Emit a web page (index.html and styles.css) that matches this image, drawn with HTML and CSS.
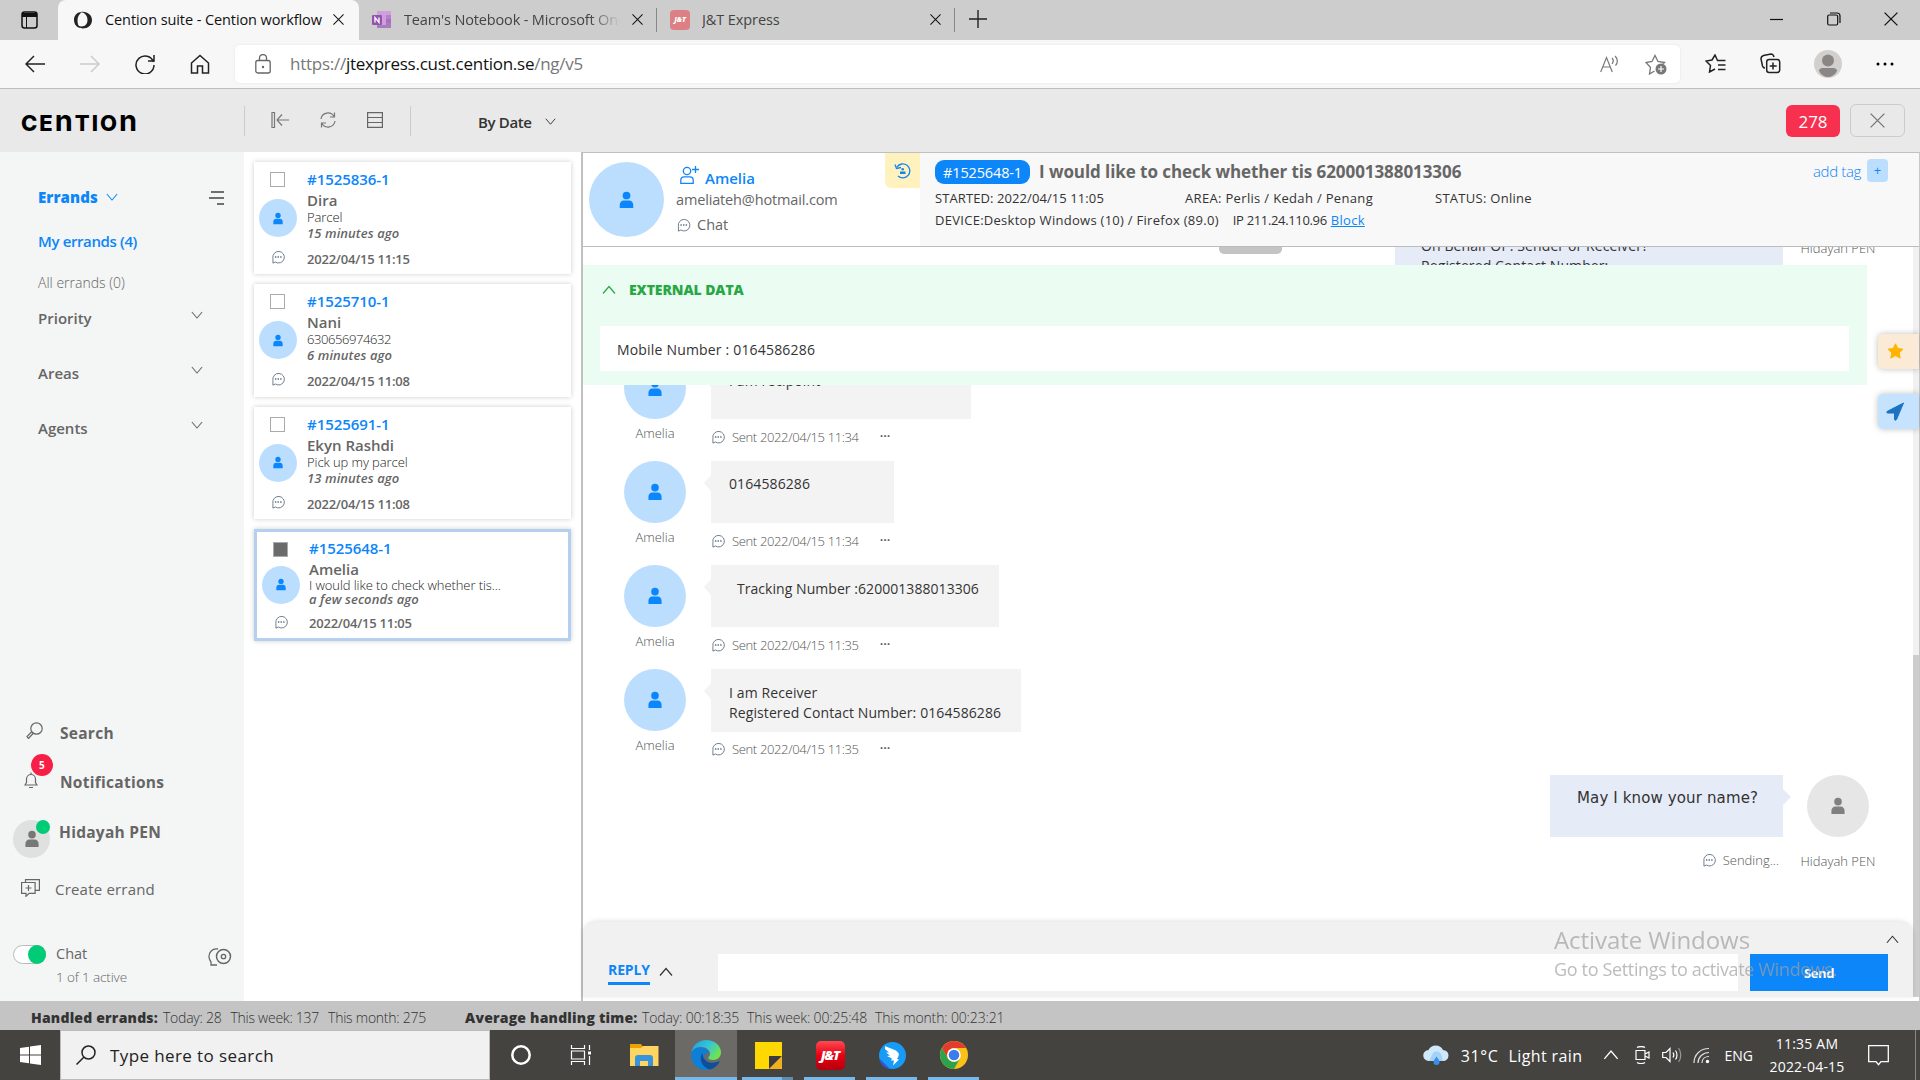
FILE: index.html
```html
<!DOCTYPE html>
<html lang="en">
<head>
  <meta charset="UTF-8" />
  <title>Cention suite - Cention workflow</title>
  <link rel="stylesheet" href="styles.css">
</head>
<body>

  <!-- ICONS -->
  <svg class="sprite">
    <symbol id="i-user" viewBox="0 0 16 20"><circle cx="8" cy="5" r="4.300"/><path d="M.5 19v-3.500c0-3 2-5 4.500-5h6c2.500 0 4.500 2 4.500 5V19z"/></symbol>
    <symbol id="i-chat" viewBox="0 0 16 16"><path d="M2.200 15V9.500A6.600 6.600 0 1 1 5 13.700L2.200 15" fill="none" stroke="currentColor" stroke-width="1"/><path d="M4.500 7.200h1.600v1.600H4.500zM7.500 7.200h1.600v1.600H7.500zM10.500 7.200h1.600v1.600h-1.600z" fill="currentColor"/></symbol>
    <symbol id="i-down" viewBox="0 0 14 9"><path d="M1 1l6 7 6-7" fill="none" stroke="currentColor" stroke-width="1.200"/></symbol>
    <symbol id="i-up" viewBox="0 0 14 9"><path d="M1 8l6-7 6 7" fill="none" stroke="currentColor" stroke-width="1.200"/></symbol>
    <symbol id="i-close" viewBox="0 0 12 12"><path d="M.5.5l11 11M11.500.5l-11 11" fill="none" stroke="currentColor" stroke-width="1.100"/></symbol>
  </svg>

  <!-- BROWSER TABS -->
  <div class="tabbar">
    <div class="tab-actions">
      <svg width="17" height="18" viewBox="0 0 17 18"><rect x="1" y="1" width="15" height="16" rx="2.500" fill="none" stroke="#111" stroke-width="1.500"/><path d="M1 2h15v4H1z" fill="#111"/><path d="M5.500 6v11" stroke="#111"/></svg>
    </div>
    <div class="tab active">
      <svg class="favicon" width="20" height="18" viewBox="0 0 20 18"><path d="M9 1C4 1 1 4.500 1 9s3 7.500 6.500 8C5 15 4.500 12 4.500 9S6 3 9 1z" fill="#222"/><path d="M8 1c6-1 11 3 11 8s-4 8.500-9.500 8.500C7 17 6 16 5 14.500c5 2.500 9.500 0 9.500-5.500 0-4-2-7-6.500-8z" fill="#222"/></svg>
      <span class="tab-title">Cention suite - Cention workflow</span>
      <svg class="tab-close" width="11" height="11"><use href="#i-close"/></svg>
    </div>
    <div class="tab">
      <svg class="favicon" width="20" height="18" viewBox="0 0 20 18"><path d="M5 0h14v17H5z" fill="#cf9fdc"/><path d="M14 4h5v4h-5z" fill="#b780cc"/><path d="M14 8h5v4h-5z" fill="#a970c0"/><path d="M14 12h5v5H5v-3h9z" fill="#a87cbd"/><rect y="4" width="10" height="10" rx="1" fill="#9355ab"/><path d="M3 11.500v-5l4 5v-5" fill="none" stroke="#fff" stroke-width="1.300"/></svg>
      <span class="tab-title fade">Team's Notebook - Microsoft OneNote</span>
      <svg class="tab-close" width="11" height="11"><use href="#i-close"/></svg>
    </div>
    <div class="tab">
      <span class="favicon jt-mini">J&amp;T</span>
      <span class="tab-title">J&amp;T Express</span>
      <svg class="tab-close" width="11" height="11"><use href="#i-close"/></svg>
    </div>
    <svg class="new-tab" width="18" height="18" viewBox="0 0 18 18"><path d="M9 0v18M0 9h18" stroke="#222" stroke-width="1.400"/></svg>
    <div class="win-controls">
      <svg width="14" height="14" viewBox="0 0 14 14"><path d="M0 7.500h13" stroke="#111" stroke-width="1.200"/></svg>
      <svg width="14" height="14" viewBox="0 0 14 14"><rect x=".7" y="3" width="10" height="10" rx="1.500" fill="none" stroke="#111" stroke-width="1.200"/><path d="M3 1h7a3 3 0 0 1 3 3v7" fill="none" stroke="#111" stroke-width="1.200"/></svg>
      <svg width="14" height="14"><use href="#i-close"/></svg>
    </div>
  </div>

  <!-- ADDRESS BAR -->
  <div class="toolbar">
    <svg class="nav-back" width="20" height="18" viewBox="0 0 20 18"><path d="M20 9H1M9 1L1 9l8 8" fill="none" stroke="#222" stroke-width="1.500"/></svg>
    <svg class="nav-btn" width="20" height="18" viewBox="0 0 20 18"><path d="M0 9h19M11 1l8 8-8 8" fill="none" stroke="#ccc" stroke-width="1.500"/></svg>
    <svg class="nav-btn" width="20" height="20" viewBox="0 0 20 20"><path d="M18.500 8A9 9 0 1 0 19 11M19 1v6h-6" fill="none" stroke="#222" stroke-width="1.500"/></svg>
    <svg class="nav-btn" width="20" height="20" viewBox="0 0 20 20"><path d="M1.500 9L10 1.500 18.500 9v10h-6v-7h-5v7h-6z" fill="none" stroke="#222" stroke-width="1.500"/></svg>
    <div class="address">
      <svg width="16" height="20" viewBox="0 0 16 20"><rect x=".8" y="6.500" width="14.400" height="12.500" rx="2" fill="none" stroke="#666" stroke-width="1.300"/><path d="M4.500 6.500V4a3.500 3.500 0 0 1 7 0v2.500" fill="none" stroke="#666" stroke-width="1.300"/><circle cx="8" cy="13" r="1.200" fill="#666"/></svg>
      <span class="url">https://<b>jtexpress.cust.cention.se</b>/ng/v5</span>
      <svg class="read-aloud" width="20" height="18" viewBox="0 0 20 18"><path d="M.7 17L6.500 2.500 12.300 17M2.700 12h7.600M12 3c1.500 1.500 1.500 4 0 6M15 1c3 2.500 3 7 .5 9.500" fill="none" stroke="#777" stroke-width="1.200"/></svg>
      <svg width="22" height="21" viewBox="0 0 22 21"><path d="M9.500 17L4.500 20l1-6.500L1 8.500l6-1L10 1.500l3 6 6.500 1-2 2" fill="none" stroke="#777" stroke-width="1.300"/><circle cx="16" cy="15" r="5.500" fill="#777"/><path d="M16 12v6M13 15h6" stroke="#fff" stroke-width="1.200"/></svg>
    </div>
    <svg class="tb-icon" width="21" height="19" viewBox="0 0 21 19"><path d="M12 6.500h8.500M13 11h7.500M13 15.500h7.500M10 15L4.500 18l1-6.500L1 7l6-1 3-5 2.500 5.500" fill="none" stroke="#222" stroke-width="1.500"/></svg>
    <svg class="tb-icon" width="21" height="21" viewBox="0 0 21 21"><rect x="6.700" y="6.500" width="13" height="13" rx="2.500" fill="none" stroke="#222" stroke-width="1.500"/><path d="M13 9.500v7M9.700 13h7M5 15c-1 0-2-.5-2.500-2L1 6c0-2 1-3 2.500-3.500L11 1c1.500 0 2.500 1 3 3" fill="none" stroke="#222" stroke-width="1.500"/></svg>
    <svg class="tb-avatar" width="28" height="28" viewBox="0 0 28 28"><circle cx="14" cy="14" r="14" fill="#d2d0ce"/><circle cx="14" cy="10.500" r="6" fill="#8a8684"/><path d="M5 21c0-2 1.500-3 4-3h10c2.500 0 4 1 4 3-2 4-5.500 6-9 6s-7-2-9-6z" fill="#8a8684"/></svg>
    <svg class="tb-dots" width="18" height="4" viewBox="0 0 18 4"><circle cx="2" cy="2" r="1.500"/><circle cx="9" cy="2" r="1.500"/><circle cx="16" cy="2" r="1.500"/></svg>
  </div>

  <!-- APP HEADER -->
  <header class="app-header">
    <div class="logo">CE<span>n</span>TIO<span>n</span></div>
    <div class="header-tools">
      <svg width="18" height="16" viewBox="0 0 18 16"><path d="M1 .5h2.500v15H1zM18 8H6M11 2.500L6 8l5 5.500" fill="none" stroke="#777" stroke-width="1.200"/></svg>
      <svg width="16" height="16" viewBox="0 0 16 16"><path d="M1 7a7 7 0 0 1 13-2.500M14.500.5v4.500h-4.500M15 9a7 7 0 0 1-13 2.500M1.500 15.500V11H6" fill="none" stroke="#777" stroke-width="1.200"/></svg>
      <svg width="16" height="16" viewBox="0 0 16 16"><path d="M.6.6h14.800v14.800H.6zM.6 5.500h14.800M.6 10.500h14.800" fill="none" stroke="#666" stroke-width="1.200"/></svg>
    </div>
    <div class="sort">By Date <svg width="11" height="7"><use href="#i-down"/></svg></div>
    <span class="count">278</span>
    <span class="close-box"><svg width="15" height="15"><use href="#i-close"/></svg></span>
  </header>

  <main class="main">

    <!-- SIDEBAR -->
    <aside class="sidebar">
      <div class="side-row errands"><span>Errands</span> <svg width="12" height="8"><use href="#i-down"/></svg>
        <svg class="filter" width="15" height="14" viewBox="0 0 15 14"><path d="M2 1h13M0 7h15M8 13h7" stroke="#444" stroke-width="1.300"/></svg>
      </div>
      <div class="side-row my"><span>My errands (4)</span></div>
      <div class="side-row all"><span>All errands (0)</span></div>
      <div class="side-row group first"><span>Priority</span><svg width="12" height="8"><use href="#i-down"/></svg></div>
      <div class="side-row group"><span>Areas</span><svg width="12" height="8"><use href="#i-down"/></svg></div>
      <div class="side-row group"><span>Agents</span><svg width="12" height="8"><use href="#i-down"/></svg></div>

      <div class="side-bottom">
        <div class="side-link search">
          <svg width="17" height="17" viewBox="0 0 17 17"><circle cx="10.500" cy="6.500" r="5.700" fill="none" stroke="#666" stroke-width="1.200"/><path d="M6 9.500l-5 5 1.500 2 5-5.500" fill="none" stroke="#666" stroke-width="1.200"/></svg>
          <span>Search</span>
        </div>
        <div class="side-link notif">
          <svg width="14" height="17" viewBox="0 0 14 17"><path d="M1 13l1.500-2.500V7a4.500 4.500 0 0 1 9 0v3.500L13 13zM7 2.500V.5M5 15.500h4" fill="none" stroke="#666" stroke-width="1.200"/></svg>
          <span>Notifications</span>
          <em class="badge">5</em>
        </div>
        <div class="side-link me">
          <div class="me-avatar"><svg width="14" height="18"><use href="#i-user"/></svg><i></i></div>
          <span>Hidayah PEN</span>
        </div>
        <div class="side-link create">
          <svg width="19" height="18" viewBox="0 0 19 18"><path d="M.6 3.500h13.500v10.800H8l-3 3v-3H.6zM4.500 3V.6h13.900v10.800H14.500M7.500 6v6M4.500 9h6" fill="none" stroke="#666" stroke-width="1.200"/></svg>
          <span>Create errand</span>
        </div>
        <div class="chat-status">
          <div class="toggle"><i></i></div>
          <div class="chat-text"><p>Chat</p><p class="active-count">1 of 1 active</p></div>
          <svg width="24" height="18" viewBox="0 0 24 18"><path d="M10 1C4 0 .8 4.500 1 9c.2 2 .8 3.500 2 5v3h6" fill="none" stroke="#666" stroke-width="1.300"/><circle cx="15.500" cy="8.500" r="7" fill="none" stroke="#666" stroke-width="1.500"/><circle cx="15.500" cy="8.500" r="2.200" fill="none" stroke="#666" stroke-width="1.300"/></svg>
        </div>
      </div>
    </aside>

    <!-- ERRAND LIST -->
    <section class="errand-list">
      <div class="card">
        <div class="card-left"><i class="check"></i><div class="avatar small"><svg width="10" height="13"><use href="#i-user"/></svg></div><svg class="chat-ico" width="14" height="14"><use href="#i-chat"/></svg></div>
        <div class="card-body"><a>#1525836-1</a><h4>Dira</h4><p>Parcel</p><em>15 minutes ago</em><time>2022/04/15 11:15</time></div>
      </div>
      <div class="card">
        <div class="card-left"><i class="check"></i><div class="avatar small"><svg width="10" height="13"><use href="#i-user"/></svg></div><svg class="chat-ico" width="14" height="14"><use href="#i-chat"/></svg></div>
        <div class="card-body"><a>#1525710-1</a><h4>Nani</h4><p class="digits">630656974632</p><em>6 minutes ago</em><time>2022/04/15 11:08</time></div>
      </div>
      <div class="card">
        <div class="card-left"><i class="check"></i><div class="avatar small"><svg width="10" height="13"><use href="#i-user"/></svg></div><svg class="chat-ico" width="14" height="14"><use href="#i-chat"/></svg></div>
        <div class="card-body"><a>#1525691-1</a><h4>Ekyn Rashdi</h4><p>Pick up my parcel</p><em>13 minutes ago</em><time>2022/04/15 11:08</time></div>
      </div>
      <div class="card selected">
        <div class="card-left"><i class="check"></i><div class="avatar small"><svg width="10" height="13"><use href="#i-user"/></svg></div><svg class="chat-ico" width="14" height="14"><use href="#i-chat"/></svg></div>
        <div class="card-body"><a>#1525648-1</a><h4>Amelia</h4><p>I would like to check whether tis...</p><em>a few seconds ago</em><time>2022/04/15 11:05</time></div>
      </div>
    </section>

    <!-- CONVERSATION -->
    <section class="conversation">
      <div class="conv-head">
        <div class="contact">
          <div class="avatar big"><svg width="15" height="18"><use href="#i-user"/></svg></div>
          <div class="contact-info">
            <div class="contact-name">
              <svg width="19" height="18" viewBox="0 0 19 18"><circle cx="7" cy="5" r="3.700" fill="none" stroke="#1485f5" stroke-width="1.300"/><path d="M.8 17.300v-3c0-2.500 1.500-3.500 3.200-3.500h6c1.700 0 3.200 1 3.200 3.500v3zM15.500 0v7M12 3.500h7" fill="none" stroke="#1485f5" stroke-width="1.300"/></svg>
              <b>Amelia</b>
            </div>
            <p class="email">ameliateh@hotmail.com</p>
            <div class="channel"><svg width="15" height="14"><use href="#i-chat"/></svg> <span>Chat</span></div>
          </div>
          <div class="history"><svg width="17" height="16" viewBox="0 0 17 16"><path d="M3 4A7 7 0 1 1 4 13M1 1.500l1.500 4L7 4.500" fill="none" stroke="#1485f5" stroke-width="1.300"/><circle cx="8.700" cy="6.200" r="1.300" fill="#1485f5"/><path d="M6 8.500h5.500v2.500H6z" fill="#1485f5"/></svg></div>
        </div>
        <div class="errand-info">
          <div class="title-row">
            <span class="pill">#1525648-1</span>
            <h1>I would like to check whether tis 620001388013306</h1>
            <span class="add-tag">add tag</span><span class="plus">+</span>
          </div>
          <div class="meta-grid">
            <span>STARTED: 2022/04/15 11:05</span><span>AREA: Perlis / Kedah / Penang</span><span>STATUS: Online</span>
          </div>
          <div class="device-row"><span class="device">DEVICE:Desktop Windows (10) / Firefox (89.0)</span><span class="ip">IP 211.24.110.96</span><a>Block</a></div>
        </div>
      </div>

      <div class="thread">
        <i class="drag-handle"></i>
        <div class="messages">
          <div class="msg out clipped">
            <div class="msg-body"><div class="bubble">On Behalf Of : Sender or Receiver?<br>Registered Contact Number:</div></div>
            <div class="who"><div class="avatar grey"></div><span>Hidayah PEN</span></div>
          </div>
          <div class="msg">
            <div class="who"><div class="avatar mid"><svg width="14" height="18"><use href="#i-user"/></svg></div><span>Amelia</span></div>
            <div class="msg-body"><div class="bubble w260">I am recipoint</div>
              <div class="sent"><svg width="14" height="14"><use href="#i-chat"/></svg><span>Sent 2022/04/15 11:34</span><b>···</b></div></div>
          </div>
          <div class="msg">
            <div class="who"><div class="avatar mid"><svg width="14" height="18"><use href="#i-user"/></svg></div><span>Amelia</span></div>
            <div class="msg-body"><div class="bubble w183">0164586286</div>
              <div class="sent"><svg width="14" height="14"><use href="#i-chat"/></svg><span>Sent 2022/04/15 11:34</span><b>···</b></div></div>
          </div>
          <div class="msg">
            <div class="who"><div class="avatar mid"><svg width="14" height="18"><use href="#i-user"/></svg></div><span>Amelia</span></div>
            <div class="msg-body"><div class="bubble w288 indent">Tracking Number :620001388013306</div>
              <div class="sent"><svg width="14" height="14"><use href="#i-chat"/></svg><span>Sent 2022/04/15 11:35</span><b>···</b></div></div>
          </div>
          <div class="msg last-in">
            <div class="who"><div class="avatar mid"><svg width="14" height="18"><use href="#i-user"/></svg></div><span>Amelia</span></div>
            <div class="msg-body"><div class="bubble w310">I am Receiver<br>Registered Contact Number: 0164586286</div>
              <div class="sent"><svg width="14" height="14"><use href="#i-chat"/></svg><span>Sent 2022/04/15 11:35</span><b>···</b></div></div>
          </div>
          <div class="msg out">
            <div class="msg-body"><div class="bubble verdana">May I know your name?</div>
              <div class="sent"><svg width="14" height="14"><use href="#i-chat"/></svg><span>Sending...</span></div></div>
            <div class="who"><div class="avatar grey"><svg width="14" height="18"><use href="#i-user"/></svg></div><span>Hidayah PEN</span></div>
          </div>
        </div>

        <div class="external">
          <div class="external-title"><svg width="14" height="10"><use href="#i-up"/></svg><span>EXTERNAL DATA</span></div>
          <div class="external-box">Mobile Number : 0164586286</div>
        </div>
      </div>

      <!-- REPLY -->
      <div class="reply">
        <div class="reply-label"><b>REPLY</b><svg width="14" height="10"><use href="#i-up"/></svg></div>
        <div class="reply-input"></div>
        <button>Send</button>
        <svg class="expand" width="13" height="9"><use href="#i-up"/></svg>
      </div>

      <div class="scrollbar"><i></i></div>
      <div class="side-tab star"><svg width="17" height="16" viewBox="0 0 17 16"><path d="M8.500.8l2.300 4.700 5.200.7-3.800 3.600 1 5.300-4.700-2.500-4.700 2.500 1-5.300L1 6.200l5.200-.7z" fill="#ffb400" stroke="#ffb400" stroke-linejoin="round"/></svg></div>
      <div class="side-tab send"><svg width="19" height="19" viewBox="0 0 19 19"><path d="M17.500 1L1 9.500c-.5 1 0 1.500 1 1.500h6.500v6.500c.5 1 1.500 1 2 0z" fill="#1c73c0" stroke="#1c73c0" stroke-linejoin="round"/></svg></div>
    </section>
  </main>

  <!-- STATISTICS -->
  <footer class="stats">
    <b>Handled errands:</b><span>Today: 28</span><span>This week: 137</span><span>This month: 275</span>
    <b class="avg">Average handling time:</b><span>Today: 00:18:35</span><span>This week: 00:25:48</span><span>This month: 00:23:21</span>
  </footer>

  <!-- TASKBAR -->
  <div class="taskbar">
    <div class="start"><svg width="21" height="20" viewBox="0 0 21 20"><path d="M0 3l9-1.300V9.500H0zM10 1.500L21 0v9.500H10zM0 10.500h9v7.800L0 17zM10 10.500h11V20l-11-1.500z" fill="#fff"/></svg></div>
    <div class="search-box">
      <svg width="20" height="20" viewBox="0 0 20 20"><circle cx="12.500" cy="7.500" r="6.500" fill="none" stroke="#222" stroke-width="1.500"/><path d="M8 12l-7.500 7.500" stroke="#222" stroke-width="1.500"/></svg>
      <span>Type here to search</span>
    </div>
    <div class="app"><svg width="22" height="22" viewBox="0 0 22 22"><circle cx="11" cy="11" r="8.700" fill="none" stroke="#fff" stroke-width="2.500"/></svg></div>
    <div class="app view"><svg width="22" height="20" viewBox="0 0 22 20"><path d="M1.500 0v3.500h13V0M1.500 20v-3.500h13V20M1.500 6h13v8h-13zM19.500 0v5M19.500 11v9" fill="none" stroke="#fff" stroke-width="1.200"/><path d="M18 6.500h3v3h-3z" fill="#fff"/></svg></div>
    <div class="app folder"><svg width="29" height="24" viewBox="0 0 29 24"><path d="M0 1h11l2 3h15v18H0z" fill="#e9a200"/><path d="M0 5h11l2-2h15.500v20H0z" fill="#ffd460"/><path d="M5 23v-8a3 3 0 0 1 3-3h12a3 3 0 0 1 3 3v8h-5v-5h-8v5z" fill="#3594dd"/></svg></div>
    <div class="app running current"><svg width="30" height="30" viewBox="0 0 30 30">
      <defs><linearGradient id="e1" x1="0" y1="0" x2="1" y2="0.500"><stop offset="0" stop-color="#1e9fe0"/><stop offset=".6" stop-color="#35c7d6"/><stop offset="1" stop-color="#6fe34f"/></linearGradient></defs>
      <path d="M0 14C1 9 5 7.500 9 7.500c5 0 9 3 9 6-3-2-6 2-4 6 2.500 5 9 5 14 1.500-2 5-7 9-13 9C6 30 0 23 0 14z" fill="#0d7fd6"/>
      <path d="M.3 13C1.500 5 8 0 15 0c8 0 15 5 15 12.500 0 4.500-3.500 7.500-8 7.500-3 0-4.700-1-4.700-2s1.700-2 1.700-4.500c0-3.500-4-6.500-9-6.500-4.500 0-8.500 2-9.700 6z" fill="url(#e1)"/>
      <path d="M11.500 13c-4 5-1 14.500 7.500 16.500 4-1 7.500-4 9.500-7.500 0-1-.5-1-1.500-.5-7 3.500-15.500 0-15.500-8.500z" fill="#0d4f9d"/></svg></div>
    <div class="app running notes"><svg width="27" height="27" viewBox="0 0 27 27"><path d="M0 0h27v14L14 27H0z" fill="#ffd800"/><path d="M14 27V14h13z" fill="#3c3c3c"/><path d="M27 14v13H14z" fill="#f0b020"/></svg></div>
    <div class="app running"><span class="jt">J&amp;T</span></div>
    <div class="app running"><svg width="27" height="27" viewBox="0 0 27 27"><circle cx="13.500" cy="13.500" r="13.500" fill="#189bf7"/><path d="M1 17l10 10C5 26 1 22 1 17z" fill="#2f55d8"/><path d="M6 4c4 2.500 11 3 13.500 7 1 2-.5 4-1.500 6l2 .5-6 6 1-5h-3l1-2-5-2.500 3-.5-4-3h3l-4-3.500z" fill="#fff"/></svg></div>
    <div class="app running"><svg width="28" height="28" viewBox="0 0 28 28"><circle cx="14" cy="14" r="14" fill="#fbc116"/><path d="M1.900 7A14 14 0 0 1 26.100 7H14a7 7 0 0 0-6 10.500z" fill="#e33b2e"/><path d="M1.900 7a14 14 0 0 0 12.100 21l6-10.500a7 7 0 0 1-12 0z" fill="#2ba24c"/><circle cx="14" cy="14" r="6.800" fill="#fff"/><circle cx="14" cy="14" r="5.300" fill="#3b7ded"/></svg></div>

    <div class="tray">
      <svg class="weather" width="26" height="20" viewBox="0 0 26 20"><path d="M6 16a5.500 5.500 0 0 1-.5-11A8 8 0 0 1 20 5a5.500 5.500 0 0 1 0 11z" fill="#cfe8fc"/><path d="M10 8c2-2 6-2 8 1l2 7H6z" fill="#a5d2f7"/><path d="M13.500 11.500c2 3 3 4 3 5.500a3 3 0 0 1-6 0c0-1.500 1-2.500 3-5.500z" fill="#3b8fe8"/></svg>
      <span class="temp">31°C</span><span class="rain">Light rain</span>
      <svg class="caret" width="16" height="10"><use href="#i-up"/></svg>
      <svg class="meet" width="15" height="18" viewBox="0 0 15 18"><path d="M1 4.500h9v9H1zM10 8l4-2v6l-4-2M2 1.500c2-1.300 6-1.300 8 0M2 16.500c2 1.300 6 1.300 8 0" fill="none" stroke="#fff" stroke-width="1.200"/></svg>
      <svg class="sound" width="20" height="18" viewBox="0 0 20 18"><path d="M.7 6.500H4l4-4v13l-4-4H.7zM11 6.500c1 1.500 1 3.500 0 5M13.500 4.500c2 2.500 2 6.500 0 9" fill="none" stroke="#fff" stroke-width="1.200"/><path d="M16.500 2c3 4 3 10 0 14" fill="none" stroke="#999" stroke-width="1.200"/></svg>
      <svg class="wifi" width="17" height="17" viewBox="0 0 17 17"><path d="M1 16C1 8 7 1.500 16 1.500M5 16c0-6 5-10.500 11-10.500M9 16c0-4 3-6.500 7-6.500" fill="none" stroke="#ddd" stroke-width="1.200"/><circle cx="14.500" cy="14.500" r="1.700" fill="#fff"/></svg>
      <span class="lang">ENG</span>
      <div class="clock"><span>11:35 AM</span><span>2022-04-15</span></div>
      <svg class="action" width="21" height="21" viewBox="0 0 21 21"><path d="M.7.7h19.600v16H13l-2.500 3-2.500-3H.7z" fill="none" stroke="#fff" stroke-width="1.300"/></svg>
    </div>
  </div>

  <div class="watermark"><p>Activate Windows</p><span>Go to Settings to activate Windows.</span></div>

</body>
</html>
```
FILE: styles.css
```css
* {
  box-sizing: border-box;
  margin: 0;
  padding: 0;
}

body {
  width: 1920px;
  height: 1080px;
  overflow: hidden;
  display: flex;
  flex-direction: column;
  font-family: "Open Sans", "Noto Sans", sans-serif;
  font-size: 15px;
  color: #333;
  background: #fff;
}

svg {
  display: block;
  flex: none;
}

span, b, em, a, time, p, h1, h4 {
  white-space: nowrap;
}

.sprite {
  position: absolute;
  width: 0;
  height: 0;
}

/* === BROWSER TABS === */
.tabbar {
  height: 40px;
  background: #cdcdcd;
  display: flex;
  flex: none;
  color: #111;
}

.tab-actions {
  width: 58px;
  padding: 11px 0 0 21px;
}

.tab {
  position: relative;
  width: 298px;
  height: 40px;
  display: flex;
  align-items: center;
  padding: 0 14px 1px 13px;
  color: #444;
}

.tab::after {
  content: "";
  position: absolute;
  right: 0;
  top: 8px;
  height: 24px;
  border-right: 1px solid #888;
}

.tab.active {
  width: 301px;
  background: #f7f7f7;
  border-radius: 8px 8px 0 0;
  padding: 0 15px 1px 15px;
  color: #111;
}

.tab.active::after {
  display: none;
}

.favicon {
  margin-right: 12px;
}

.jt-mini {
  width: 20px;
  height: 20px;
  border-radius: 4px;
  background: #dc8085;
  color: #fff;
  font-size: 7px;
  font-weight: 800;
  font-style: italic;
  line-height: 20px;
  text-align: center;
}

.tab-title {
  flex: 1;
  overflow: hidden;
  font-size: 14.500px;
  letter-spacing: -0.09px;
}

.tab-title.fade {
  flex: none;
  width: 216px;
  letter-spacing: -0.15px;
  mask-image: linear-gradient(to right, #000 86%, transparent);
}

.tab-close {
  margin-left: auto;
  color: #111;
}

.new-tab {
  margin: 10px 0 0 14px;
}

.win-controls {
  margin-left: auto;
  display: flex;
  gap: 43px;
  padding: 12px 22px 0 0;
}

/* === ADDRESS BAR === */
.toolbar {
  height: 49px;
  flex: none;
  display: flex;
  align-items: center;
  background: #f7f7f7;
  border-bottom: 1px solid #bdbdbd;
}

.nav-back {
  margin-left: 25px;
}

.nav-btn {
  margin-left: 35px;
}

.toolbar > svg {
  margin-top: -1px;
}

.address {
  width: 1445px;
  height: 38px;
  margin-left: 25px;
  padding: 0 13px 0 20px;
  background: #fff;
  border-radius: 5px;
  box-shadow: 0 0 3px rgba(0, 0, 0, 0.08);
  display: flex;
  align-items: center;
}

.url {
  margin: -2px 0 0 19px;
  font-size: 17px;
  letter-spacing: -0.26px;
  color: #777;
}

.url b {
  font-weight: 400;
  color: #111;
}

.read-aloud {
  margin: 0 25px 0 auto;
}

.tb-icon {
  margin-left: 25px;
}

.tb-icon + .tb-icon {
  margin-left: 34px;
}

.tb-avatar {
  margin-left: 33px;
}

.tb-dots {
  margin-left: 34px;
}

/* === APP HEADER === */
.app-header {
  height: 63px;
  flex: none;
  background: #e9e9e9;
  display: flex;
  align-items: center;
  padding-right: 15px;
}

.logo {
  width: 244px;
  padding: 4px 0 0 21px;
  font-family: Inter, sans-serif;
  font-weight: 800;
  font-size: 22px;
  line-height: 30px;
  letter-spacing: 2px;
  color: #000;
}

.logo span {
  font-size: 29px;
  font-weight: 700;
  line-height: 0;
}

.header-tools {
  width: 167px;
  height: 30px;
  display: flex;
  gap: 31px;
  align-items: center;
  padding-left: 26px;
  border-left: 1px solid #ccc;
  border-right: 1px solid #ccc;
}

.header-tools svg {
  margin-top: -1px;
}

.sort {
  display: flex;
  align-items: center;
  gap: 13px;
  margin: 2px 0 0 67px;
  font-size: 15px;
  font-weight: 600;
  letter-spacing: -0.35px;
}

.count {
  width: 54px;
  height: 32px;
  margin-left: auto;
  border-radius: 6px;
  background: #f7304f;
  color: #fff;
  font-size: 17px;
  line-height: 33px;
  text-align: center;
}

.close-box {
  width: 55px;
  height: 33px;
  margin-left: 10px;
  border: 1px solid #ccc;
  border-radius: 6px;
  display: flex;
  align-items: center;
  justify-content: center;
  color: #777;
}

/* === SIDEBAR === */
.main {
  height: 849px;
  flex: none;
  display: flex;
}

.sidebar {
  width: 244px;
  background: #f4f5f5;
  display: flex;
  flex-direction: column;
  padding: 30px 0 16px;
  color: #666;
}

.side-row {
  height: 30px;
  display: flex;
  align-items: center;
  padding-left: 38px;
  font-weight: 600;
}

.errands {
  color: #0c86f8;
  font-weight: 800;
}

.errands span {
  width: 69px;
  letter-spacing: 0.1px;
}

.errands svg {
  margin: -1px 0 0 -1px;
}

.errands .filter {
  margin: 2px 0 0 91px;
}

.my {
  margin-top: 14px;
  color: #0c86f8;
  letter-spacing: -0.37px;
}

.all {
  margin-top: 11px;
  font-size: 14px;
  font-weight: 300;
}

.group {
  justify-content: space-between;
  padding-right: 41px;
  margin-top: 25px;
}

.group.first {
  margin-top: 6px;
}

.group svg {
  margin-top: -6px;
}

.side-bottom {
  margin-top: auto;
}

.side-link {
  position: relative;
  height: 30px;
  display: flex;
  align-items: center;
  font-size: 15.500px;
  font-weight: 700;
  letter-spacing: 0.27px;
}

.search {
  padding-left: 26px;
}

.search svg {
  margin: -6px 17px 0 0;
}

.search span {
  margin-top: -1px;
}

.notif {
  margin-top: 19px;
  padding-left: 24px;
}

.notif svg {
  margin: -3px 22px 0 0;
}

.badge {
  position: absolute;
  left: 31px;
  top: -13px;
  width: 22px;
  height: 22px;
  border-radius: 50%;
  background: #f71f45;
  color: #fff;
  font-size: 10px;
  font-style: normal;
  line-height: 22px;
  text-align: center;
}

.me {
  height: 38px;
  margin-top: 23px;
  padding-left: 13px;
  align-items: flex-start;
}

.me > span {
  margin-top: 1px;
}

.me-avatar {
  position: relative;
  width: 37px;
  height: 38px;
  margin-right: 9px;
  border-radius: 50%;
  background: #dfe0e0;
  display: flex;
  align-items: center;
  justify-content: center;
  fill: #777;
}

.me-avatar i {
  position: absolute;
  right: 0;
  top: 0;
  width: 14px;
  height: 14px;
  border-radius: 50%;
  background: #00cb77;
}

.create {
  margin-top: 17px;
  padding-left: 21px;
  font-size: 15px;
  font-weight: 500;
  letter-spacing: 0.2px;
}

.create svg {
  margin: -4px 15px 0 0;
}

.create span {
  margin-top: -2px;
}

.chat-status {
  height: 46px;
  margin-top: 34px;
  padding-left: 13px;
  display: flex;
}

.toggle {
  width: 33px;
  height: 19px;
  margin-top: 6px;
  border: 1px solid #bbb;
  border-radius: 10px;
  background: #fff;
  display: flex;
  justify-content: flex-end;
}

.toggle i {
  width: 18px;
  height: 19px;
  margin: -1px;
  border-radius: 50%;
  background: #00cb77;
}

.chat-text {
  width: 162px;
  padding: 3px 0 0 10px;
  font-size: 14.500px;
  line-height: 24px;
}

.chat-text .active-count {
  margin-top: -1px;
  font-size: 13.500px;
  font-weight: 300;
  letter-spacing: -0.13px;
}

.chat-status > svg {
  margin-top: 9px;
}

/* === ERRAND LIST === */
.errand-list {
  width: 337px;
  padding: 10px;
  display: flex;
  flex-direction: column;
  gap: 10px;
}

.card {
  height: 112.300px;
  width: 317px;
  display: flex;
  background: #fff;
  box-shadow: 0 0 5px rgba(0, 0, 0, 0.2);
}

.card-left {
  width: 47px;
  display: flex;
  flex-direction: column;
  align-items: center;
  padding-top: 10px;
}

.check {
  width: 15px;
  height: 15px;
  border: 1px solid #aaa;
}

.avatar {
  border-radius: 50%;
  background: #bbdeff;
  fill: #0c86fc;
  display: flex;
  align-items: center;
  justify-content: center;
}

.avatar.small {
  width: 38px;
  height: 38px;
  margin: 12px 0 13px;
}

.chat-ico, .sent svg, .channel svg {
  color: #5e6e80;
}

.card-body {
  display: flex;
  flex-direction: column;
  padding: 6px 0 0 6px;
  color: #666;
}

.card-body a {
  color: #0c86f8;
  font-weight: 600;
  letter-spacing: -0.05px;
  line-height: 22px;
}

.card-body h4 {
  margin-top: 1px;
  font-size: 15px;
  font-weight: 600;
  line-height: 18px;
}

.card-body p {
  color: #222;
  font-size: 13px;
  font-weight: 300;
  letter-spacing: -0.08px;
  line-height: 16px;
}

.card-body .digits {
  letter-spacing: -0.42px;
}

.card-body em {
  font-size: 13px;
  font-weight: 600;
  letter-spacing: 0.1px;
  line-height: 16px;
}

.card-body time {
  margin-top: 8px;
  font-size: 13px;
  font-weight: 600;
  letter-spacing: -0.22px;
  line-height: 20px;
}

.selected {
  border: 3px solid #b5d0ee;
}

.selected .check {
  background: #6b6b6b;
}

.selected .avatar {
  margin: 9px 0 11px;
}

.selected .card-body {
  padding: 5px 0 0 5px;
}

.selected h4 {
  margin-top: 1px;
}

.selected p {
  line-height: 14px;
}

.selected em {
  line-height: 15px;
}

.selected time {
  margin-top: 6px;
}

/* === CONVERSATION HEAD === */
.conversation {
  position: relative;
  width: 1339px;
  border-left: 2px solid #c0c0c0;
  border-top: 1px solid #c0c0c0;
  border-right: 1px solid #c8c8c8;
  display: flex;
  flex-direction: column;
}

.conv-head {
  height: 94px;
  flex: none;
  display: flex;
  border-bottom: 1px solid #bcbcbc;
}

.contact {
  width: 337px;
  display: flex;
  padding: 9px 0 0 6px;
}

.avatar.big {
  width: 75px;
  height: 75px;
}

.contact-info {
  padding-left: 12px;
  color: #666;
}

.contact-name {
  display: flex;
  height: 26px;
  padding: 4px 0 0 4px;
}

.contact-name b {
  margin-left: 6px;
  color: #0c86f8;
  font-weight: 600;
  line-height: 24px;
}

.email {
  font-size: 14.500px;
  letter-spacing: -0.15px;
  line-height: 24px;
}

.channel {
  display: flex;
  align-items: center;
  gap: 6px;
  margin-top: 1px;
  line-height: 24px;
  font-size: 14.500px;
}

.history {
  width: 35px;
  height: 35px;
  margin: -9px 0 0 auto;
  border-radius: 0 0 0 6px;
  background: #fff2bf;
  display: flex;
  align-items: center;
  justify-content: center;
}

.errand-info {
  flex: 1;
  padding: 7px 30px 0 15px;
  background: #f8f8f8;
  font-size: 13px;
  font-weight: 500;
  letter-spacing: 0.09px;
  line-height: 20px;
}

.title-row {
  height: 24px;
  display: flex;
  align-items: center;
}

.pill {
  height: 24px;
  width: 95px;
  border-radius: 9px;
  background: #0c86f8;
  color: #fff;
  font-size: 14.500px;
  letter-spacing: -0.14px;
  line-height: 25px;
  text-align: center;
}

.title-row h1 {
  margin-left: 9px;
  font-size: 17px;
  font-weight: 700;
  letter-spacing: -0.07px;
  color: #666;
}

.add-tag {
  margin: -3px 0 0 auto;
  font-size: 15px;
  font-weight: 300;
  letter-spacing: -0.35px;
  color: #0c86f8;
}

.plus {
  width: 21px;
  height: 23px;
  margin: -4px 1px 0 6px;
  border-radius: 4px;
  background: #bbdeff;
  color: #0c86f8;
  line-height: 22px;
  text-align: center;
}

.meta-grid {
  display: grid;
  grid-template-columns: 250px 250px 1fr;
  margin-top: 4px;
}

.meta-grid span:nth-child(2) {
  letter-spacing: 0.33px;
}

.meta-grid span:nth-child(3) {
  letter-spacing: 0.28px;
}

.device-row {
  display: flex;
  margin-top: 2px;
}

.device {
  letter-spacing: 0.28px;
}

.device-row .ip {
  margin: 0 4px 0 14px;
  letter-spacing: -0.34px;
}

.device-row a {
  color: #0c86f8;
  text-decoration: underline;
  letter-spacing: 0.29px;
}

/* === THREAD === */
.thread {
  position: relative;
  height: 675px;
  overflow: hidden;
}

.drag-handle {
  position: absolute;
  left: 636px;
  top: 0;
  width: 63px;
  height: 7px;
  border-radius: 0 0 5px 5px;
  background: #c4c4c4;
}

.messages {
  padding: 0 50px 0 41px;
  margin-top: -85px;
}

.msg {
  height: 104px;
  display: flex;
}

.who {
  width: 62px;
  display: flex;
  flex-direction: column;
  align-items: center;
  font-size: 13px;
  font-weight: 300;
  color: #555;
}

.who span {
  margin-top: 5px;
}

.avatar.mid, .avatar.grey {
  width: 62px;
  height: 62px;
  flex: none;
}

.avatar.grey {
  background: #e6e6e6;
  fill: #808080;
}

.msg-body {
  margin-left: 25px;
}

.bubble {
  position: relative;
  min-height: 62px;
  padding: 13px 18px 10px;
  background: #f3f3f3;
  font-size: 14px;
  letter-spacing: 0.1px;
  line-height: 20px;
}

.bubble::before {
  content: "";
  position: absolute;
  left: -7px;
  top: 14px;
  border: 8px solid transparent;
  border-left: 0;
  border-right: 7px solid #f3f3f3;
}

.w183 {
  width: 183px;
}

.w260 {
  width: 260px;
  padding-top: 14px;
}

.w288 {
  width: 288px;
}

.w310 {
  width: 310px;
  height: 63px;
  padding-top: 14px;
}

.indent {
  padding-top: 14px;
  padding-left: 26px;
  letter-spacing: 0.05px;
}

.sent {
  display: flex;
  align-items: center;
  margin-top: 8px;
  font-size: 13px;
  font-weight: 300;
  letter-spacing: -0.35px;
  line-height: 20px;
  color: #555;
}

.sent span {
  margin-left: 7px;
}

.sent b {
  margin: -2px 0 0 21px;
  font-weight: 600;
  letter-spacing: 0;
}

.w310 + .sent {
  margin-top: 7px;
}

.last-in {
  height: 106px;
}

.out {
  justify-content: flex-end;
}

.out .msg-body {
  margin: 0 24px 0 0;
}

.out .bubble {
  background: #e5ebf7;
}

.out .bubble::before {
  left: auto;
  right: -8px;
  border-right: 0;
  border-left: 8px solid #e5ebf7;
}

.out .who span {
  margin-top: 15px;
}

.out .sent {
  justify-content: flex-end;
  margin-top: 13px;
  padding-right: 4px;
  letter-spacing: 0;
}

.bubble.verdana {
  width: 233px;
  padding-left: 27px;
  font-family: "DejaVu Sans", sans-serif;
  font-size: 15px;
  letter-spacing: 0.13px;
}

.clipped {
  height: 195px;
}

.clipped .bubble {
  width: 388px;
  height: 180px;
  padding: 74px 26px 0;
}

.scrollbar {
  position: absolute;
  right: 0;
  top: 94px;
  width: 6px;
  height: 750px;
  padding-top: 408px;
  background: #f1f1f1;
}

.scrollbar i {
  display: block;
  height: 342px;
  background: #cdcdcd;
}

/* external data lies over the scrolled messages */
.external {
  position: absolute;
  left: 0;
  top: 18px;
  width: 1284px;
  height: 120px;
  padding: 15px 18px 0 17px;
  background: #ebfdf2;
}

.external-title {
  display: flex;
  align-items: center;
  height: 20px;
  padding-left: 2px;
  color: #28a745;
  font-size: 14px;
  font-weight: 800;
  letter-spacing: -0.08px;
}

.external-title span {
  margin: -1px 0 0 13px;
}

.external-box {
  height: 45px;
  margin-top: 26px;
  padding-left: 17px;
  background: #fff;
  font-size: 14px;
  letter-spacing: 0.18px;
  line-height: 47px;
}

.side-tab {
  position: absolute;
  right: 0;
  width: 41px;
  height: 35px;
  padding: 9px 0 0 9px;
  border-radius: 5px 0 0 5px;
  box-shadow: 0 0 6px rgba(0, 0, 0, 0.25);
}

.side-tab.star {
  top: 181px;
  background: #fbead6;
}

.side-tab.send {
  top: 241px;
  padding: 8px 0 0 8px;
  background: #c5e3ff;
}

/* === REPLY === */
.reply {
  position: relative;
  z-index: 1;
  width: 1330px;
  height: 75px;
  margin-bottom: 4px;
  padding: 32px 25px 0;
  border-radius: 14px 14px 0 0;
  background: #f1f1f1;
  box-shadow: 0 -1px 5px rgba(0, 0, 0, 0.12);
  display: flex;
}

.reply-label {
  width: 110px;
  height: 30px;
  display: flex;
}

.reply-label b {
  height: 31px;
  border-bottom: 3px solid #0c86f8;
  color: #0c86f8;
  font-size: 14px;
  letter-spacing: -0.11px;
  line-height: 31px;
}

.reply-label svg {
  margin: 13px 0 0 9px;
}

.reply-input {
  width: 1020px;
  height: 37px;
  background: #fff;
}

.reply button {
  width: 138px;
  height: 37px;
  margin-left: 12px;
  border: none;
  background: #0c86f8;
  color: #fff;
  font: 700 13px "Open Sans", sans-serif;
  letter-spacing: -0.4px;
}

.expand {
  position: absolute;
  right: 14px;
  top: 13px;
}

/* === STATISTICS === */
.stats {
  height: 29px;
  flex: none;
  display: flex;
  padding-left: 31px;
  background: #c4c4c4;
  font-size: 14px;
  font-weight: 300;
  letter-spacing: -0.25px;
  line-height: 33px;
}

.stats b {
  width: 132px;
  font-weight: 800;
  letter-spacing: 0.2px;
}

.stats span {
  margin-right: 9px;
}

.stats .avg {
  width: 177px;
  margin-left: 30px;
}

.stats .avg ~ span {
  letter-spacing: -0.15px;
  margin-right: 8px;
}

/* === TASKBAR === */
.taskbar {
  height: 50px;
  flex: none;
  display: flex;
  background: #444340;
  color: #fff;
}

.start {
  width: 60px;
  padding: 15px 0 0 20px;
}

.search-box {
  width: 430px;
  display: flex;
  align-items: center;
  gap: 14px;
  padding-left: 15px;
  background: #f1f1f1;
  border: 1px solid #bbb;
  color: #222;
  font-size: 17px;
  letter-spacing: 0.4px;
}

.app {
  position: relative;
  width: 62px;
  height: 50px;
  display: flex;
  align-items: center;
  justify-content: center;
}

.view {
  width: 61px;
  padding-right: 3px;
}

.running::after {
  content: "";
  position: absolute;
  left: 5px;
  bottom: 0;
  width: 51px;
  height: 3px;
  background: #76b9ed;
}

.current {
  background: #6b6a67;
}

.current::after {
  left: 0;
  width: 62px;
}

.notes::after {
  background: linear-gradient(to right, #76b9ed 40px, #5f8db2 40px);
}

.jt {
  width: 29px;
  height: 29px;
  border-radius: 5px;
  background: linear-gradient(#ff4a52, #e60012 50%, #b5000c);
  font-size: 13px;
  font-weight: 800;
  font-style: italic;
  line-height: 29px;
  text-align: center;
  letter-spacing: -1px;
}

.tray {
  position: relative;
  margin-left: auto;
  display: flex;
  align-items: center;
  font-size: 16px;
}

.temp {
  margin: 2px 0 0 12px;
  letter-spacing: 0.6px;
}

.rain {
  margin: 2px 0 0 10px;
  letter-spacing: 0.4px;
}

.caret {
  margin-left: 20px;
}

.meet {
  margin-left: 16px;
}

.sound {
  margin-left: 12px;
}

.wifi {
  margin-left: 11px;
}

.lang {
  margin-left: 15px;
  font-size: 14px;
}

.clock {
  width: 76px;
  margin-left: 16px;
  display: flex;
  flex-direction: column;
  align-items: center;
  font-size: 14px;
  letter-spacing: 0.2px;
  line-height: 23px;
}

.action {
  margin: 0 26px 0 23px;
}

.tray::after {
  content: "";
  height: 50px;
  margin-right: 4px;
  border-right: 1px solid #888;
}

/* === ACTIVATION WATERMARK === */
.watermark {
  position: fixed;
  z-index: 2;
  left: 1554px;
  top: 924px;
  color: rgba(160, 160, 160, 0.7);
  font-size: 18px;
  letter-spacing: -0.34px;
  line-height: 27px;
}

.watermark p {
  font-size: 24px;
  letter-spacing: -0.06px;
  line-height: 32px;
}
```
